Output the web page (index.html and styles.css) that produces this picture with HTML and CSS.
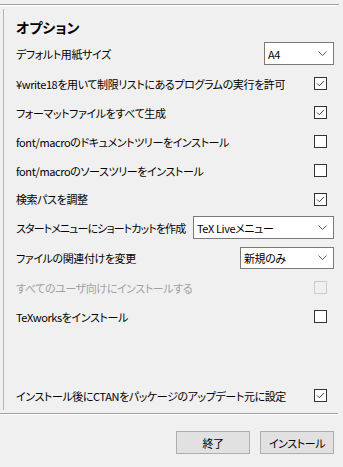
FILE: index.html
```html
<!DOCTYPE html>
<html lang="ja">
<head>
    <meta charset="UTF-8">
    <title>オプション</title>
    <link rel="stylesheet" href="styles.css">
</head>
<body>

<div class="rule top-rule"></div>

<div class="group">
    <h2 class="group-title">オプション</h2>

    <div class="row tall">
        <span class="label">デフォルト用紙サイズ</span>
        <div class="combo combo-paper">A4<svg class="chev" viewBox="0 0 9 5"><polyline points="0.5,0.5 4.5,4.5 8.5,0.5"/></svg></div>
    </div>
    <div class="row">
        <span class="label">¥write18を用いて制限リストにあるプログラムの実行を許可</span>
        <span class="check on"><svg viewBox="0 0 13 13"><polyline points="2.5,6.5 5.2,9.2 10.5,3.5"/></svg></span>
    </div>
    <div class="row">
        <span class="label">フォーマットファイルをすべて生成</span>
        <span class="check on"><svg viewBox="0 0 13 13"><polyline points="2.5,6.5 5.2,9.2 10.5,3.5"/></svg></span>
    </div>
    <div class="row">
        <span class="label">font/macroのドキュメントツリーをインストール</span>
        <span class="check"></span>
    </div>
    <div class="row">
        <span class="label">font/macroのソースツリーをインストール</span>
        <span class="check"></span>
    </div>
    <div class="row short">
        <span class="label">検索パスを調整</span>
        <span class="check on"><svg viewBox="0 0 13 13"><polyline points="2.5,6.5 5.2,9.2 10.5,3.5"/></svg></span>
    </div>
    <div class="row">
        <span class="label label-tight">スタートメニューにショートカットを作成</span>
        <div class="combo combo-menu">TeX Liveメニュー<svg class="chev" viewBox="0 0 9 5"><polyline points="0.5,0.5 4.5,4.5 8.5,0.5"/></svg></div>
    </div>
    <div class="row tall">
        <span class="label">ファイルの関連付けを変更</span>
        <div class="combo combo-assoc">新規のみ<svg class="chev" viewBox="0 0 9 5"><polyline points="0.5,0.5 4.5,4.5 8.5,0.5"/></svg></div>
    </div>
    <div class="row disabled">
        <span class="label">すべてのユーザ向けにインストールする</span>
        <span class="check"></span>
    </div>
    <div class="row">
        <span class="label">TeXworksをインストール</span>
        <span class="check"></span>
    </div>

    <div class="spacer"></div>

    <div class="row">
        <span class="label">インストール後にCTANをパッケージのアップデート元に設定</span>
        <span class="check on"><svg viewBox="0 0 13 13"><polyline points="2.5,6.5 5.2,9.2 10.5,3.5"/></svg></span>
    </div>
</div>

<div class="rule bottom-rule"></div>

<div class="buttons">
    <button class="btn">終了</button>
    <button class="btn">インストール</button>
</div>

</body>
</html>
```

FILE: styles.css
```css
body {
    margin: 0;
    background-color: #f0f0f0;
    font-family: "Noto Sans CJK JP", "Noto Sans", sans-serif;
    font-size: 11px;
    letter-spacing: -0.4px;
    color: #000;
    font-feature-settings: "palt";
    width: 343px;
    height: 467px;
    overflow: hidden;
}
.rule {
    height: 0;
    border-top: 1px solid #a0a0a0;
    border-bottom: 1px solid #fff;
}
.top-rule {
    margin: 4px 4px 0 0;
}
.bottom-rule {
    margin: 3px 5px 0 0;
}
.group {
    margin: 3px 0 0 3px;
    border-left: 1px solid #b4b4b4;
    padding: 0 9px 0 12px;
    height: 401px;
    display: flex;
    flex-direction: column;
}
.group-title {
    margin: 0;
    padding-top: 7px;
    height: 22px;
    line-height: 22px;
    font-size: 14px;
    font-weight: bold;
    letter-spacing: 0;
}
.row {
    height: 29px;
    display: flex;
    align-items: center;
    justify-content: space-between;
    white-space: nowrap;
}
.row.tall {
    height: 31px;
}
.row.short {
    height: 28px;
}
.row.disabled .label {
    color: #a0a0a0;
}
.label-tight {
    letter-spacing: -0.9px;
}
.spacer {
    flex: 1;
}
.check {
    width: 11px;
    height: 11px;
    border: 1px solid #333;
    background-color: #fff;
    margin-right: 7px;
    flex: none;
}
.check svg {
    display: block;
    width: 11px;
    height: 11px;
}
.check svg polyline {
    fill: none;
    stroke: #333;
    stroke-width: 1.1;
}
.row.disabled .check {
    border-color: #cccccc;
    background-color: #f0f0f0;
}
.combo {
    box-sizing: border-box;
    height: 23px;
    border: 1px solid #7a7a7a;
    background-color: #fff;
    display: flex;
    align-items: center;
    justify-content: space-between;
    padding: 0 6px 0 3px;
    flex: none;
}
.combo-paper {
    width: 70px;
}
.combo-menu {
    width: 141px;
}
.combo-assoc {
    width: 94px;
    height: 22px;
}
.chev {
    width: 9px;
    height: 5px;
}
.chev polyline {
    fill: none;
    stroke: #606060;
    stroke-width: 1;
}
.buttons {
    display: flex;
    justify-content: flex-end;
    gap: 10px;
    padding: 16px 9px 0 0;
}
.btn {
    box-sizing: border-box;
    width: 74px;
    height: 23px;
    background-color: #e1e1e1;
    border: 1px solid #adadad;
    font-family: inherit;
    font-size: 11px;
    letter-spacing: -0.4px;
    font-feature-settings: "palt";
    color: #000;
    padding: 0;
}
```
